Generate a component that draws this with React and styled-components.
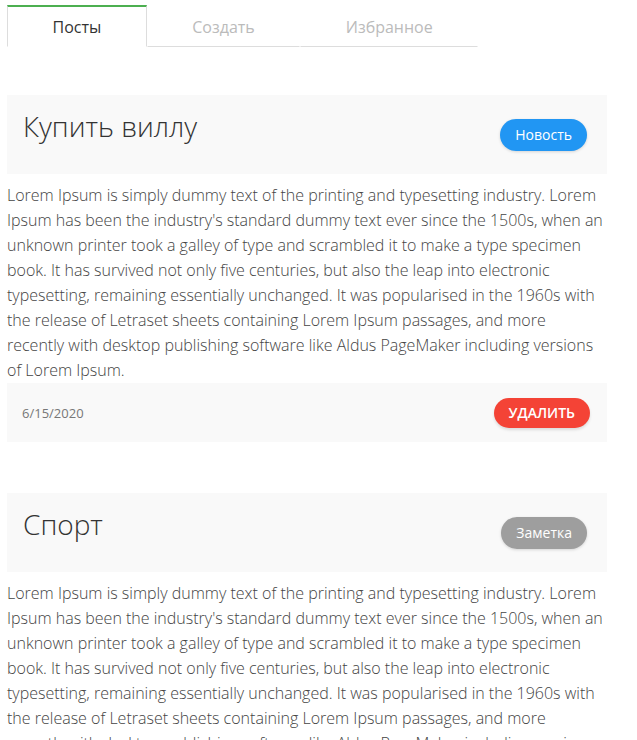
import React, {useState} from "react";
import styled, {createGlobalStyle} from "styled-components";

const GlobalStyle = createGlobalStyle`
  body {
    margin: 0;
    background: #fff;
    font-family: "Open Sans", "Noto Sans", sans-serif;
  }
`

const Page = styled.div`
  padding: 5px 0 0 7px;
  width: 600px;
`

const Tabs = styled.div`
  display: flex;
  width: 470px;
  border-bottom: 1px solid #ddd;
  margin-bottom: 48px;
`

const Tab = styled.div`
  padding: 0 44.5px;
  height: 39px;
  line-height: 40px;
  font-size: 16px;
  color: ${p => p.active ? '#333' : '#bbb'};
  border-top: 2px solid ${p => p.active ? '#4caf50' : 'transparent'};
  border-left: 1px solid ${p => p.active ? '#ddd' : 'transparent'};
  border-right: 1px solid ${p => p.active ? '#ddd' : 'transparent'};
  background: #fff;
  margin-bottom: -1px;
  border-bottom: 1px solid ${p => p.active ? '#fff' : '#ddd'};
  cursor: pointer;
`

const Card = styled.div`
  margin-bottom: 51px;
`

const CardHeader = styled.div`
  display: flex;
  align-items: center;
  justify-content: space-between;
  background: #f9f9f9;
  height: 79px;
  padding: 0 20px 0 16px;
`

const Title = styled.h2`
  margin: 0 0 17px;
  font-size: 28px;
  font-weight: 300;
  color: #333;
`

const Badge = styled.span`
  display: inline-block;
  margin-top: 1px;
  height: 32px;
  line-height: 32px;
  padding: 0 15px;
  border-radius: 16px;
  font-size: 14px;
  color: #fff;
  background: ${p => p.kind === 'note' ? '#9e9e9e' : '#2196f3'};
  box-shadow: 0 1px 3px rgba(0,0,0,0.15);
`

const Body = styled.p`
  margin: 0;
  padding: 9px 0 0;
  font-size: 16px;
  font-weight: 300;
  line-height: 25px;
  color: #444;
`

const CardFooter = styled.div`
  display: flex;
  align-items: center;
  justify-content: space-between;
  background: #f9f9f9;
  height: 59px;
  padding: 0 17px 0 15px;
`

const DateText = styled.span`
  font-size: 13px;
  color: #777;
`

const DeleteButton = styled.button`
  height: 30px;
  padding: 0 15px;
  border: none;
  border-radius: 15px;
  background: #f44336;
  color: #fff;
  font-family: inherit;
  font-size: 14px;
  font-weight: 600;
  letter-spacing: 0;
  text-transform: uppercase;
  box-shadow: 0 2px 3px rgba(0,0,0,0.12);
  cursor: pointer;
`

const lorem = "Lorem Ipsum is simply dummy text of the printing and typesetting industry. Lorem Ipsum has been the industry's standard dummy text ever since the 1500s, when an unknown printer took a galley of type and scrambled it to make a type specimen book. It has survived not only five centuries, but also the leap into electronic typesetting, remaining essentially unchanged. It was popularised in the 1960s with the release of Letraset sheets containing Lorem Ipsum passages, and more recently with desktop publishing software like Aldus PageMaker including versions of Lorem Ipsum."

const posts = [
    {id: 1, title: 'Купить виллу', kind: 'news', date: '6/15/2020'},
    {id: 2, title: 'Спорт', kind: 'note', date: '6/15/2020'},
]

const Post = ({post}) => (
    <Card>
        <CardHeader>
            <Title>{post.title}</Title>
            <Badge kind={post.kind}>{post.kind === 'note' ? 'Заметка' : 'Новость'}</Badge>
        </CardHeader>
        <Body>{lorem}</Body>
        <CardFooter>
            <DateText>{post.date}</DateText>
            <DeleteButton>Удалить</DeleteButton>
        </CardFooter>
    </Card>
)

export default function App() {
    const [tab, setTab] = useState(0);

    return(
        <Page>
            <GlobalStyle/>
            <Tabs>
                {['Посты', 'Создать', 'Избранное'].map((t, i) =>
                    <Tab key={t} active={tab === i} onClick={() => setTab(i)}>{t}</Tab>
                )}
            </Tabs>
            {posts.map(p => <Post key={p.id} post={p}/>)}
        </Page>
    )
}
